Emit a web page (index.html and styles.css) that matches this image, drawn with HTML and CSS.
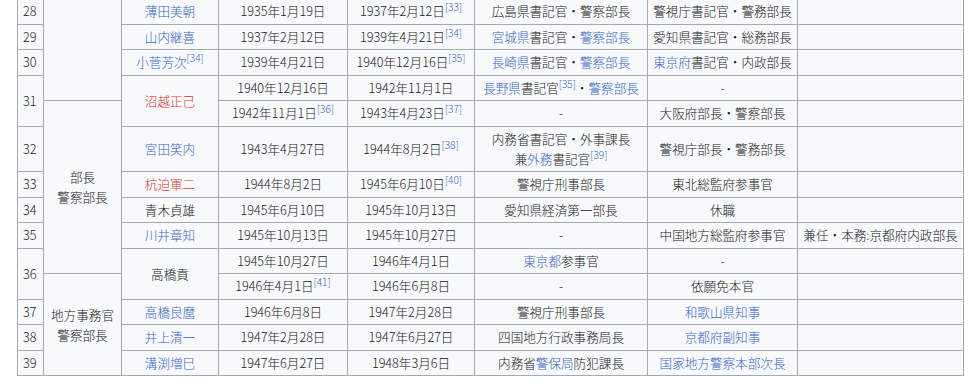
FILE: index.html
```html
<!DOCTYPE html>
<html lang="ja">
<head>
  <meta charset="UTF-8" />
  <title>警察部長一覧</title>
  <link rel="stylesheet" href="styles.css">
</head>
<body>
  <div class="content">
    <table class="wikitable">
      <colgroup>
        <col class="col-no">
        <col class="col-post">
        <col class="col-name">
        <col class="col-date">
        <col class="col-date2">
        <col class="col-before">
        <col class="col-after">
        <col class="col-note">
      </colgroup>
      <tbody>
        <tr>
          <td class="no">28</td>
          <td rowspan="4"></td>
          <td><a href="#">薄田美朝</a></td>
          <td>1935年1月19日</td>
          <td>1937年2月12日<sup><a href="#">[33]</a></sup></td>
          <td>広島県書記官・警察部長</td>
          <td>警視庁書記官・警務部長</td>
          <td></td>
        </tr>
        <tr>
          <td class="no">29</td>
          <td><a href="#">山内継喜</a></td>
          <td>1937年2月12日</td>
          <td>1939年4月21日<sup><a href="#">[34]</a></sup></td>
          <td><a href="#">宮城県</a>書記官・<a href="#">警察部長</a></td>
          <td>愛知県書記官・総務部長</td>
          <td></td>
        </tr>
        <tr>
          <td class="no">30</td>
          <td><a href="#">小菅芳次</a><sup><a href="#">[34]</a></sup></td>
          <td>1939年4月21日</td>
          <td>1940年12月16日<sup><a href="#">[35]</a></sup></td>
          <td><a href="#">長崎県</a>書記官・<a href="#">警察部長</a></td>
          <td><a href="#">東京府</a>書記官・内政部長</td>
          <td></td>
        </tr>
        <tr>
          <td class="no" rowspan="2">31</td>
          <td rowspan="2"><a href="#" class="new">沼越正己</a></td>
          <td>1940年12月16日</td>
          <td>1942年11月1日</td>
          <td><a href="#">長野県</a>書記官<sup><a href="#">[35]</a></sup>・<a href="#">警察部長</a></td>
          <td>-</td>
          <td></td>
        </tr>
        <tr>
          <td rowspan="6">部長<br>警察部長</td>
          <td>1942年11月1日<sup><a href="#">[36]</a></sup></td>
          <td>1943年4月23日<sup><a href="#">[37]</a></sup></td>
          <td>-</td>
          <td>大阪府部長・警察部長</td>
          <td></td>
        </tr>
        <tr>
          <td class="no">32</td>
          <td><a href="#">宮田笑内</a></td>
          <td>1943年4月27日</td>
          <td>1944年8月2日<sup><a href="#">[38]</a></sup></td>
          <td>内務省書記官・外事課長<br>兼<a href="#">外務</a>書記官<sup><a href="#">[39]</a></sup></td>
          <td>警視庁部長・警務部長</td>
          <td></td>
        </tr>
        <tr>
          <td class="no">33</td>
          <td><a href="#" class="new">杭迫軍二</a></td>
          <td>1944年8月2日</td>
          <td>1945年6月10日<sup><a href="#">[40]</a></sup></td>
          <td>警視庁刑事部長</td>
          <td>東北総監府参事官</td>
          <td></td>
        </tr>
        <tr>
          <td class="no">34</td>
          <td>青木貞雄</td>
          <td>1945年6月10日</td>
          <td>1945年10月13日</td>
          <td>愛知県経済第一部長</td>
          <td>休職</td>
          <td></td>
        </tr>
        <tr>
          <td class="no">35</td>
          <td><a href="#">川井章知</a></td>
          <td>1945年10月13日</td>
          <td>1945年10月27日</td>
          <td>-</td>
          <td>中国地方総監府参事官</td>
          <td>兼任・本務:京都府内政部長</td>
        </tr>
        <tr>
          <td class="no" rowspan="2">36</td>
          <td rowspan="2">高橋貢</td>
          <td>1945年10月27日</td>
          <td>1946年4月1日</td>
          <td><a href="#">東京都</a>参事官</td>
          <td>-</td>
          <td></td>
        </tr>
        <tr>
          <td rowspan="4">地方事務官<br>警察部長</td>
          <td>1946年4月1日<sup><a href="#">[41]</a></sup></td>
          <td>1946年6月8日</td>
          <td>-</td>
          <td>依願免本官</td>
          <td></td>
        </tr>
        <tr>
          <td class="no">37</td>
          <td><a href="#">高橋良麿</a></td>
          <td>1946年6月8日</td>
          <td>1947年2月28日</td>
          <td>警視庁刑事部長</td>
          <td><a href="#">和歌山県知事</a></td>
          <td></td>
        </tr>
        <tr>
          <td class="no">38</td>
          <td><a href="#">井上清一</a></td>
          <td>1947年2月28日</td>
          <td>1947年6月27日</td>
          <td>四国地方行政事務局長</td>
          <td><a href="#">京都府副知事</a></td>
          <td></td>
        </tr>
        <tr>
          <td class="no">39</td>
          <td><a href="#">溝渕増巳</a></td>
          <td>1947年6月27日</td>
          <td>1948年3月6日</td>
          <td>内務省<a href="#">警保局</a>防犯課長</td>
          <td><a href="#">国家地方警察本部次長</a></td>
          <td></td>
        </tr>
      </tbody>
    </table>
  </div>
</body>
</html>
```

FILE: styles.css
```css
/* Base */
body {
  margin: 0;
  height: 383px;
  overflow: hidden;
  background: #fff;
  color: #202122;
  font-family: "Noto Sans CJK JP", "Noto Sans", sans-serif;
}

.content {
  padding-left: 17px;
}

a {
  color: #3366cc;
  text-decoration: none;
}

a.new {
  color: #d73333;
}

/* Table */
.wikitable {
  margin-top: -2px;
  width: 947px;
  table-layout: fixed;
  border-collapse: collapse;
  background: #f8f9fa;
  font-size: 12.6px;
  font-weight: 300;
  line-height: 20px;
}

.wikitable td {
  border: 1px solid #a2a9b1;
  padding: 2.25px 5px;
  text-align: center;
  vertical-align: middle;
  white-space: nowrap;
}

.wikitable td.no {
  text-align: left;
}

.col-no { width: 26px; }
.col-post { width: 78px; }
.col-name { width: 97px; }
.col-date { width: 129px; }
.col-date2 { width: 127px; }
.col-before { width: 173px; }
.col-after { width: 150px; }
.col-note { width: 166px; }

sup {
  font-size: 80%;
  line-height: 0;
  vertical-align: 0.45em;
}
```
